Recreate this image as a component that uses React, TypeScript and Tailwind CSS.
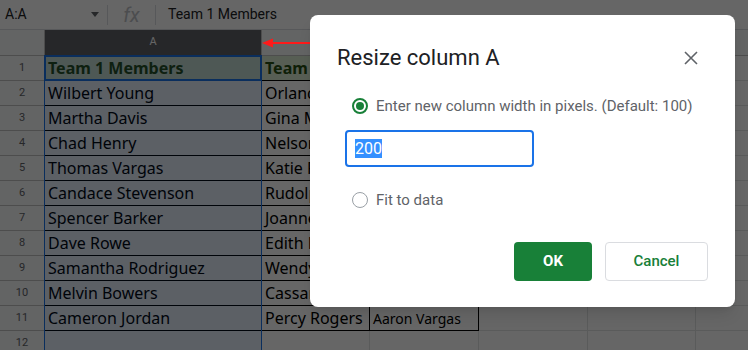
import React from "react";

const COL_A = [
  "Team 1 Members",
  "Wilbert Young",
  "Martha Davis",
  "Chad Henry",
  "Thomas Vargas",
  "Candace Stevenson",
  "Spencer Barker",
  "Dave Rowe",
  "Samantha Rodriguez",
  "Melvin Bowers",
  "Cameron Jordan",
];

const COL_B = [
  "Team 2 Members",
  "Orlando Wells",
  "Gina Mendoza",
  "Nelson Hart",
  "Katie Ford",
  "Rudolph Ray",
  "Joanne Ellis",
  "Edith Nolan",
  "Wendy Lane",
  "Cassandra Bell",
  "Percy Rogers",
];

const COL_C = [
  "Team 3 Members",
  "Lucas Grant",
  "Irene Moss",
  "Victor Shaw",
  "Paula Reed",
  "Owen Marsh",
  "Hazel Price",
  "Ian Brooks",
  "Nora Fields",
  "Derek Stone",
  "Aaron Vargas",
];

function FormulaBar() {
  return (
    <div className="flex h-[30px] items-center border-b border-[#dadce0] bg-white text-[14px] text-[#202124] [font-family:Roboto,sans-serif]">
      <div className="flex w-[107px] shrink-0 items-center justify-between pl-[5px] pr-[8px]">
        <span>A:A</span>
        <span className="h-0 w-0 border-x-[4px] border-t-[5px] border-x-transparent border-t-[#5f6368]" />
      </div>
      <div className="h-[20px] w-px bg-[#dadce0]" />
      <span className="w-[47px] text-center text-[20px] italic text-[#bdc1c6] [font-family:'Liberation Serif',serif]">
        fx
      </span>
      <div className="h-[20px] w-px bg-[#dadce0]" />
      <span className="pl-[12px]">Team 1 Members</span>
    </div>
  );
}

function HeaderRow() {
  const cols = [
    { w: "w-[108px]", l: "B" },
    { w: "w-[109px]", l: "C" },
    { w: "w-[109px]", l: "D" },
    { w: "w-[108px]", l: "E" },
    { w: "w-[60px]", l: "F" },
  ];
  return (
    <div className="flex h-[26px] border-b border-[#c0c0c0] bg-[#f8f9fa] text-[11px] text-[#5f6368] [font-family:Roboto,sans-serif]">
      <div className="w-[45px] shrink-0 border-r border-[#c0c0c0]" />
      <div className="flex w-[217px] shrink-0 items-center justify-center border-r border-[#c0c0c0] bg-[#5f6368] text-white">
        A
      </div>
      {cols.map((c) => (
        <div
          key={c.l}
          className={`${c.w} flex shrink-0 items-center justify-center border-r border-[#c0c0c0]`}
        >
          {c.l}
        </div>
      ))}
    </div>
  );
}

function Row({ n }: { n: number }) {
  const data = n <= 11;
  const head = n === 1;
  const bg = head ? "bg-[#d9ead3]" : "bg-white";
  const line = data ? "border-black" : "border-[#e2e3e3]";
  const txt = head ? "font-bold text-[#274e13]" : "text-black";
  return (
    <div className="flex h-[25px] [font-family:'Liberation Sans',Arial,sans-serif]">
      <div className="flex w-[45px] shrink-0 items-center justify-center border-r border-b border-[#c0c0c0] bg-[#f8f9fa] text-[11px] text-[#5f6368] [font-family:Roboto,sans-serif]">
        {n}
      </div>
      <div
        className={`flex w-[217px] shrink-0 items-center overflow-hidden whitespace-nowrap border-r border-b pl-[3px] text-[16px] ${line} ${bg} ${txt}`}
      >
        {data ? COL_A[n - 1] : ""}
      </div>
      <div
        className={`flex w-[108px] shrink-0 items-center overflow-hidden whitespace-nowrap border-r border-b pl-[3px] text-[16px] ${line} ${bg} ${txt}`}
      >
        {data ? COL_B[n - 1] : ""}
      </div>
      <div
        className={`flex w-[109px] shrink-0 items-center overflow-hidden whitespace-nowrap border-r border-b pl-[3px] text-[14px] ${line} ${bg} ${txt}`}
      >
        {data ? COL_C[n - 1] : ""}
      </div>
      <div className="w-[109px] shrink-0 border-r border-b border-[#e2e3e3] bg-white" />
      <div className="w-[108px] shrink-0 border-r border-b border-[#e2e3e3] bg-white" />
      <div className="w-[60px] shrink-0 border-b border-[#e2e3e3] bg-white" />
    </div>
  );
}

function Radio({ on }: { on: boolean }) {
  return on ? (
    <span className="flex h-[16px] w-[16px] shrink-0 items-center justify-center rounded-full border-2 border-[#188038]">
      <span className="h-[8px] w-[8px] rounded-full bg-[#188038]" />
    </span>
  ) : (
    <span className="h-[16px] w-[16px] shrink-0 rounded-full border border-[#9aa0a6]" />
  );
}

function Dialog() {
  return (
    <div className="absolute left-[310px] top-[15px] flex h-[292px] w-[425px] flex-col rounded-[8px] bg-white pl-[27px] pr-[27px] shadow-lg [font-family:Roboto,sans-serif]">
      <div className="flex h-[80px] shrink-0 items-center justify-between pt-[5px]">
        <h2 className="text-[22px] text-[#202124]">Resize column A</h2>
        <svg width="14" height="14" viewBox="0 0 14 14" className="mr-[10px]">
          <path d="M1 1L13 13M13 1L1 13" stroke="#5f6368" strokeWidth="1.6" />
        </svg>
      </div>
      <label className="flex items-center gap-[8px] pl-[15px] text-[15px] text-[#5f6368]">
        <Radio on />
        Enter new column width in pixels. (Default: 100)
      </label>
      <div className="ml-[8px] mt-[12px] flex h-[37px] w-[189px] shrink-0 items-center rounded-[4px] border-2 border-[#1a73e8] pl-[8px] text-[16px]">
        <span className="bg-[#3390ff] leading-[19px] text-white">200</span>
      </div>
      <label className="mt-[22px] flex items-center gap-[8px] pl-[15px] text-[15px] text-[#5f6368]">
        <Radio on={false} />
        Fit to data
      </label>
      <div className="mt-[31px] flex justify-end gap-[13px]">
        <button className="h-[39px] w-[78px] rounded-[4px] bg-[#188038] text-[15px] font-bold text-white">
          OK
        </button>
        <button className="h-[39px] w-[103px] rounded-[4px] border border-[#dadce0] bg-white text-[15px] font-medium text-[#188038]">
          Cancel
        </button>
      </div>
    </div>
  );
}

export default function App() {
  return (
    <div className="relative h-[350px] w-[748px] overflow-hidden bg-white">
      <FormulaBar />
      <HeaderRow />
      {Array.from({ length: 12 }, (_, i) => (
        <Row key={i} n={i + 1} />
      ))}

      {/* column A selection */}
      <div className="pointer-events-none absolute left-[44px] top-[55px] h-[300px] w-[218px] border border-[#1a73e8] bg-[#0e65eb]/10" />
      <div className="pointer-events-none absolute left-[44px] top-[55px] h-[26px] w-[218px] border-2 border-[#1a73e8]" />

      {/* modal overlay */}
      <div className="absolute inset-0 bg-black/60" />

      {/* annotation arrow */}
      <svg className="absolute left-[260px] top-[37px]" width="52" height="12" viewBox="0 0 52 12">
        <path d="M12 6H52" stroke="#ff1a1a" strokeWidth="2" />
        <path d="M2 6L13 1.5V10.5Z" fill="#ff1a1a" />
      </svg>

      <Dialog />
    </div>
  );
}
